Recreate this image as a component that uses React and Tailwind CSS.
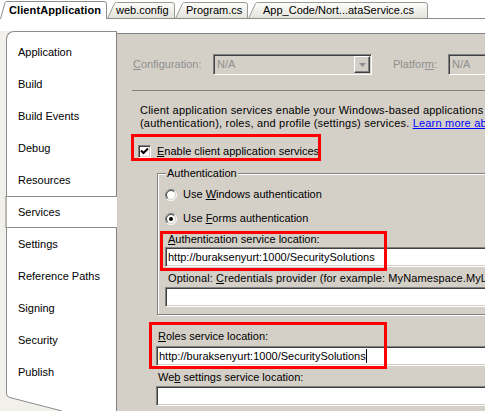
import React from "react";

const tabs = [
  { label: "ClientApplication", w: 107, cls: "w-[107px]", pl: "pl-[9px] pt-[1px] font-bold tracking-[0.1px]", active: true },
  { label: "web.config", w: 68, cls: "w-[68px]", pl: "pl-[9px] pt-[2px]" },
  { label: "Program.cs", w: 73, cls: "w-[73px]", pl: "pl-[11px] pt-[2px]" },
  { label: "App_Code/Nort...ataService.cs", w: 180, cls: "w-[180px]", pl: "pl-[15px] pt-[2px]" },
];

const navItems = [
  "Application",
  "Build",
  "Build Events",
  "Debug",
  "Resources",
  "Services",
  "Settings",
  "Reference Paths",
  "Signing",
  "Security",
  "Publish",
];

const Tab = ({ tab, i }) => {
  const w = tab.w;
  return (
    <div className={`relative h-[19px] shrink-0 ${tab.cls}`}>
      <svg className="absolute inset-0" width={w} height={19}>
        <defs>
          <linearGradient id={`tabfill${i}`} x1="0" y1="0" x2="0" y2="1">
            <stop offset="0" stopColor="#fdfdfb" />
            <stop offset="1" stopColor="#e3e2da" />
          </linearGradient>
        </defs>
        {tab.active ? (
          <path
            d={`M0.5,19 L5,2.5 Q5.5,1.5 7,1.5 L${w - 3},1.5 Q${w - 0.5},1.5 ${w - 0.5},4 L${w - 0.5},19`}
            fill="#fff"
            stroke="#8c8c8c"
          />
        ) : (
          <>
            <path
              d={`M0.5,18.5 L7.5,3.5 Q8,2.5 9.5,2.5 L${w - 3},2.5 Q${w - 0.5},2.5 ${w - 0.5},5 L${w - 0.5},18.5 Z`}
              fill={`url(#tabfill${i})`}
              stroke="#9a9a94"
            />
            <line x1="0" y1="18.5" x2={w} y2="18.5" stroke="#8c8c8c" />
          </>
        )}
      </svg>
      <span className={`relative flex h-full items-center whitespace-nowrap ${tab.pl}`}>{tab.label}</span>
    </div>
  );
};

const Sunken = ({ className = "", children }) => (
  <div
    className={`border border-t-[#808080] border-l-[#808080] border-b-white border-r-white shadow-[inset_1px_1px_0_#404040,inset_-1px_-1px_0_#d4d0c8] ${className}`}
  >
    {children}
  </div>
);

const Select = ({ className }) => (
  <Sunken className={`flex h-[21px] p-[1px] bg-[#d4d0c8] ${className}`}>
    <span className="flex-1 pl-[2px] leading-[17px] text-[#8f8f8f]">N/A</span>
    <div className="flex h-full w-[16px] items-center justify-center border border-t-white border-l-white border-r-[#404040] border-b-[#404040] bg-[#d4d0c8] shadow-[inset_-1px_-1px_0_#808080]">
      <svg width="7" height="4" viewBox="0 0 7 4">
        <path d="M0,0 L7,0 L3.5,4 Z" fill="#8f8f8f" />
      </svg>
    </div>
  </Sunken>
);

const Textbox = ({ className, value, cursor }) => (
  <Sunken className={`h-[20px] bg-white pl-[2px] ${className}`}>
    {value && (
      <span className="flex h-full items-center whitespace-nowrap">
        {value}
        {cursor && <span className="inline-block h-[14px] w-px bg-black" />}
      </span>
    )}
  </Sunken>
);

const Radio = ({ checked }) => (
  <svg width="12" height="12" viewBox="0 0 12 12" className="shrink-0">
    <circle cx="6" cy="6" r="5" fill="#fff" />
    <path d="M2.1,9.9 A5.5,5.5 0 0 1 9.9,2.1" stroke="#808080" fill="none" />
    <path d="M9.9,2.1 A5.5,5.5 0 0 1 2.1,9.9" stroke="#fff" fill="none" />
    <path d="M2.8,9.2 A4.5,4.5 0 0 1 9.2,2.8" stroke="#404040" fill="none" />
    <path d="M9.2,2.8 A4.5,4.5 0 0 1 2.8,9.2" stroke="#d4d0c8" fill="none" />
    {checked && <circle cx="6" cy="6" r="2" fill="#000" />}
  </svg>
);

const Checkbox = () => (
  <Sunken className="flex h-[13px] w-[13px] shrink-0 items-center justify-center bg-white">
    <svg width="9" height="9" viewBox="0 0 9 9">
      <path d="M1,3.5 L3.5,6 L8,1.5" stroke="#000" strokeWidth="2" fill="none" />
    </svg>
  </Sunken>
);

const Nav = () => (
  <div className="relative w-[117px] shrink-0 pt-[12px]">
    <div className="h-full bg-[#f1f0ea] pl-[6px]">
      <div className="flex h-full w-[111px] flex-col rounded-tl-[8px] border-t border-l border-[#8c8c8c] bg-white">
        <div className="h-[4px] border-r border-[#808080]" />
        {navItems.map((item) =>
          item === "Services" ? (
            <div
              key={item}
              className="-ml-[2px] flex h-[32px] items-center border-y border-l-2 border-[#8c8c8c] border-l-[#b9b8b0] bg-white pl-[11px]"
            >
              {item}
            </div>
          ) : (
            <div key={item} className="flex h-[32px] items-center border-r border-[#808080] pl-[11px]">
              {item}
            </div>
          )
        )}
        <div className="flex-1 border-r border-[#808080]" />
      </div>
    </div>
    <svg className="absolute left-0 top-[375px]" width="70" height="20">
      <path d="M0,0 L6.5,0 Q7,3 10,3.5 L62,17 L62,20 L0,20 Z" fill="#f1f0ea" />
      <path d="M6.5,0 Q7,3 10,3.5 L62,17" stroke="#8c8c8c" fill="none" />
    </svg>
  </div>
);

const Panel = () => (
  <div className="mt-[14px] flex-1 overflow-hidden border-t border-[#808080] bg-[#d4d0c8]">
    <div className="mt-[20px] flex h-[21px] items-center pl-[16px]">
      <span className="w-[80px] shrink-0 text-[#8f8f8f]">
        <span className="underline">C</span>onfiguration:
      </span>
      <Select className="w-[159px] shrink-0" />
      <span className="ml-[21px] w-[55px] shrink-0 text-[#8f8f8f]">
        Platfor<span className="underline">m</span>:
      </span>
      <Select className="w-[60px] shrink-0" />
    </div>

    <div className="ml-[15px] mt-[15px] h-px bg-[#808080]" />

    <div className="mt-[13px] whitespace-nowrap pl-[23px] tracking-[0.2px]">
      <div>Client application services enable your Windows-based applications to use the ASP.NET login</div>
      <div>
        (authentication), roles, and profile (settings) services.{" "}
        <span className="text-[#0000ff] underline">Learn more about client application services</span>
      </div>
    </div>

    <div className="ml-[21px] mt-[15px] flex h-[13px] items-center gap-[6px]">
      <Checkbox />
      <span className="whitespace-nowrap">
        <span className="underline">E</span>nable client application services
      </span>
    </div>

    <div className="relative ml-[40px] mt-[15px] w-[400px] border border-[#808080] pb-[7px] shadow-[inset_1px_1px_0_#fff,1px_1px_0_#fff]">
      <span className="absolute -top-[7px] left-[8px] bg-[#d4d0c8] px-[1px]">Authentication</span>
      <div className="mt-[14px] flex h-[13px] items-center gap-[6px] pl-[7px]">
        <Radio />
        <span>
          Use <span className="underline">W</span>indows authentication
        </span>
      </div>
      <div className="mt-[11px] flex h-[13px] items-center gap-[6px] pl-[7px]">
        <Radio checked />
        <span>
          Use <span className="underline">F</span>orms authentication
        </span>
      </div>
      <div className="mt-[8px] pl-[10px]">
        <span className="underline">A</span>uthentication service location:
      </div>
      <Textbox className="ml-[7px] mt-[1px]" value="http://buraksenyurt:1000/SecuritySolutions" />
      <div className="mt-[5px] whitespace-nowrap pl-[10px] tracking-[0.1px]">
        Optional: <span className="underline">C</span>redentials provider (for example: MyNamespace.MyLoginForm, MyAssembly):
      </div>
      <Textbox className="ml-[7px] mt-[2px]" />
    </div>

    <div className="ml-[41px] mt-[15px]">
      <span className="underline">R</span>oles service location:
    </div>
    <Textbox className="ml-[39px] mt-[3px] w-[340px]" value="http://buraksenyurt:1000/SecuritySolutions" cursor />
    <div className="ml-[41px] mt-[5px]">
      We<span className="underline">b</span> settings service location:
    </div>
    <Textbox className="ml-[39px] mt-[2px] w-[340px]" />
  </div>
);

export default function App() {
  return (
    <div className="relative h-[411px] w-[485px] overflow-hidden bg-white text-[11px] leading-[13px] text-black [font-family:'Liberation_Sans',Arial,sans-serif]">
      <div className="flex h-[19px]">
        {tabs.map((tab, i) => (
          <Tab key={tab.label} tab={tab} i={i} />
        ))}
        <div className="flex-1 border-b border-[#8c8c8c]" />
      </div>
      <div className="flex h-[392px]">
        <Nav />
        <Panel />
      </div>

      <div className="absolute left-[131px] top-[134px] h-[27px] w-[190px] border-[3px] border-[#ff0000]" />
      <div className="absolute left-[160px] top-[231px] h-[40px] w-[227px] border-[3px] border-[#ff0000]" />
      <div className="absolute left-[149px] top-[322px] h-[47px] w-[238px] border-[3px] border-[#ff0000]" />
    </div>
  );
}
